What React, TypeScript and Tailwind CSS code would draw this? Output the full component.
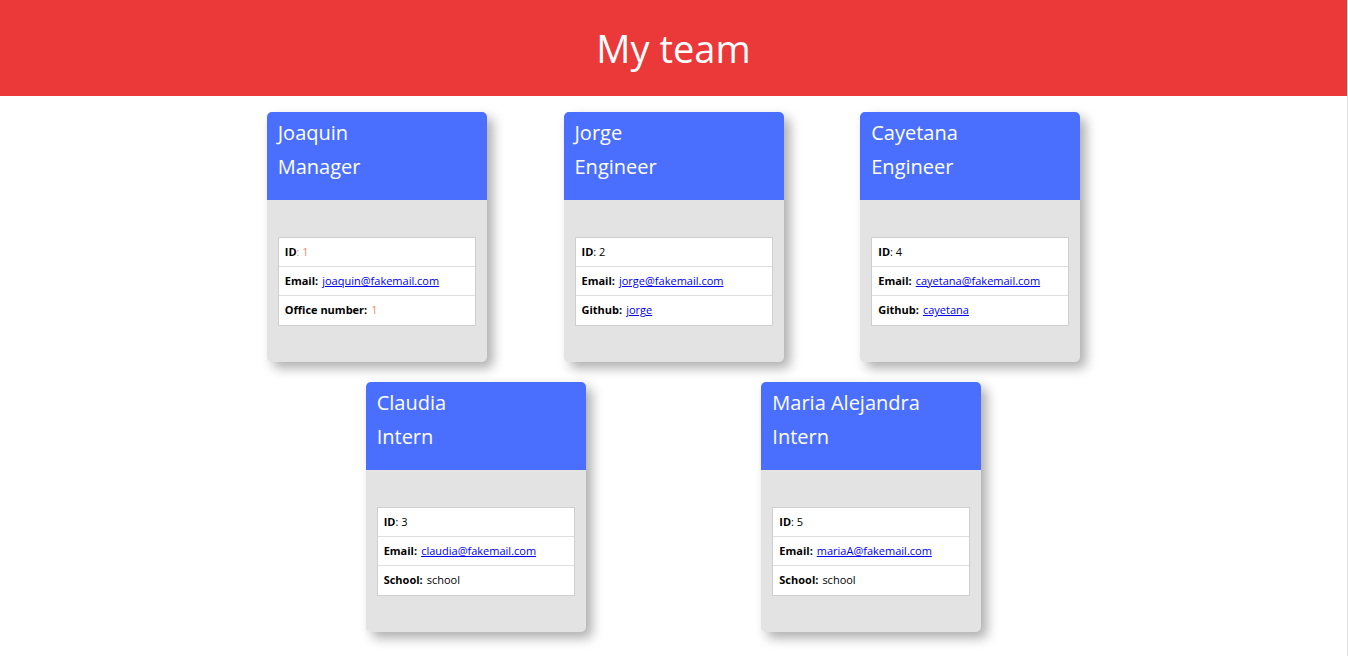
// Team roster page: red banner + employee cards

type Member = {
  name: string;
  role: string;
  id: number;
  email: string;
  extraLabel: string;
  extra: string;
  extraKind: "number" | "link" | "text";
};

const team: Member[] = [
  { name: "Joaquin", role: "Manager", id: 1, email: "joaquin@fakemail.com", extraLabel: "Office number", extra: "1", extraKind: "number" },
  { name: "Jorge", role: "Engineer", id: 2, email: "jorge@fakemail.com", extraLabel: "Github", extra: "jorge", extraKind: "link" },
  { name: "Cayetana", role: "Engineer", id: 4, email: "cayetana@fakemail.com", extraLabel: "Github", extra: "cayetana", extraKind: "link" },
  { name: "Claudia", role: "Intern", id: 3, email: "claudia@fakemail.com", extraLabel: "School", extra: "school", extraKind: "text" },
  { name: "Maria Alejandra", role: "Intern", id: 5, email: "mariaA@fakemail.com", extraLabel: "School", extra: "school", extraKind: "text" },
];

function Card({ m }: { m: Member }) {
  const isManager = m.role === "Manager";
  return (
    <div className="mx-[20px] w-[220px] h-[250px] rounded-[5px] bg-[#e3e3e3] shadow-[6px_6px_12px_rgba(0,0,0,0.32)] overflow-hidden">
      {/* Name + role header */}
      <div className="h-[88px] bg-[#4a6fff] px-[11px] pt-[4px] text-white text-[20px] leading-[34px]">
        <div>{m.name}</div>
        <div>{m.role}</div>
      </div>

      {/* Details list */}
      <div className="px-[11px] pt-[37px]">
        <ul className="bg-white border border-[#cfcfcf] text-[11px] text-black">
          <li className="h-[29px] flex items-center px-[6px] border-b border-[#dedede]">
            <span className="font-bold">ID</span>
            <span className={isManager ? "text-[#ec8a6a]" : ""}>: {m.id}</span>
          </li>
          <li className="h-[29px] flex items-center px-[6px] border-b border-[#dedede]">
            <span className="font-bold mr-1">Email:</span>
            <a href="#" className="text-[#0000ee] underline">{m.email}</a>
          </li>
          <li className="h-[29px] flex items-center px-[6px]">
            <span className="font-bold mr-1">{m.extraLabel}:</span>
            {m.extraKind === "link" ? (
              <a href="#" className="text-[#0000ee] underline">{m.extra}</a>
            ) : (
              <span className={m.extraKind === "number" ? "text-[#ec8a6a]" : ""}>{m.extra}</span>
            )}
          </li>
        </ul>
      </div>
    </div>
  );
}

export default function App() {
  return (
    <div className="min-h-[656px] bg-white font-['Open_Sans',sans-serif] border-r border-[#e5e5e5]">
      <header className="h-[96px] bg-[#eb3838] flex items-center justify-center">
        <h1 className="text-white text-[38px] leading-none">My team</h1>
      </header>

      <main className="w-[927px] mx-auto pt-[16px] flex flex-wrap justify-evenly gap-y-[20px]">
        {team.map((m) => (
          <Card key={m.id} m={m} />
        ))}
      </main>
    </div>
  );
}
